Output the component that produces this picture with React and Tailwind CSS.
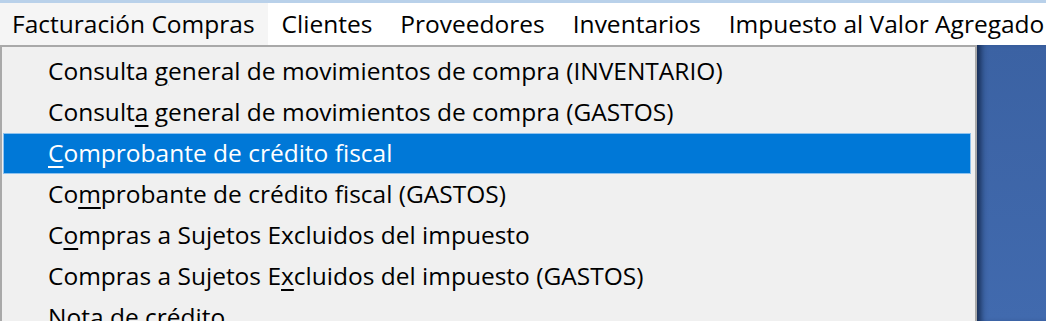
import React from 'react';

const menuBar = [
    'Facturación Compras',
    'Clientes',
    'Proveedores',
    'Inventarios',
    'Impuesto al Valor Agregado'
];

// text, index of the mnemonic letter
const items = [
    ['Consulta general de movimientos de compra (INVENTARIO)', 9],
    ['Consulta general de movimientos de compra (GASTOS)', 7],
    ['Comprobante de crédito fiscal', 0],
    ['Comprobante de crédito fiscal (GASTOS)', 2],
    ['Compras a Sujetos Excluidos del impuesto', 1],
    ['Compras a Sujetos Excluidos del impuesto (GASTOS)', 19],
    ['Nota de crédito', -1]
];

const Label = ({ text, at }) => {
    if (at < 0) return <span>{text}</span>;
    return (
        <span>
            {text.slice(0, at)}
            <span className="underline decoration-2 underline-offset-[4px]">{text[at]}</span>
            {text.slice(at + 1)}
        </span>
    );
};

const App = () => {
    return (
        <div
            className="w-[1046px] h-[321px] overflow-hidden flex flex-col bg-white text-black"
            style={{ fontFamily: '"Open Sans", "Noto Sans", sans-serif' }}
        >
            <div className="h-[3px] bg-[#b9d1ea] shrink-0" />
            <div className="h-[42px] shrink-0 flex items-stretch bg-white text-[24.5px] whitespace-nowrap">
                {menuBar.map((m, i) => (
                    <div
                        key={m}
                        className={`flex items-center ${i === 0 ? 'pl-[12px] pr-[13px] bg-[#f5f5f5]' : 'px-[14px]'}`}
                    >
                        {m}
                    </div>
                ))}
            </div>
            <div className="flex-1 flex min-h-0">
                <div className="w-[977px] shrink-0 bg-[#f0f0f0] border-l-2 border-t-2 border-r-2 border-[#a9a9a9] pt-[4px] pl-[1px] pr-[4px]">
                    {items.map(([t, at], i) => (
                        <div
                            key={t}
                            className={`h-[41px] flex items-center pl-[44px] text-[24.5px] whitespace-nowrap border ${
                                i === 2
                                    ? 'bg-[#0078d7] border-[#8ec2ee] text-white'
                                    : 'border-transparent'
                            }`}
                        >
                            <Label text={t} at={at} />
                        </div>
                    ))}
                </div>
                <div className="flex-1 bg-gradient-to-b from-[#3b62a3] to-[#416aae] shadow-[inset_8px_0_6px_-4px_rgba(10,25,55,0.75)]" />
            </div>
        </div>
    );
};

export default App;
